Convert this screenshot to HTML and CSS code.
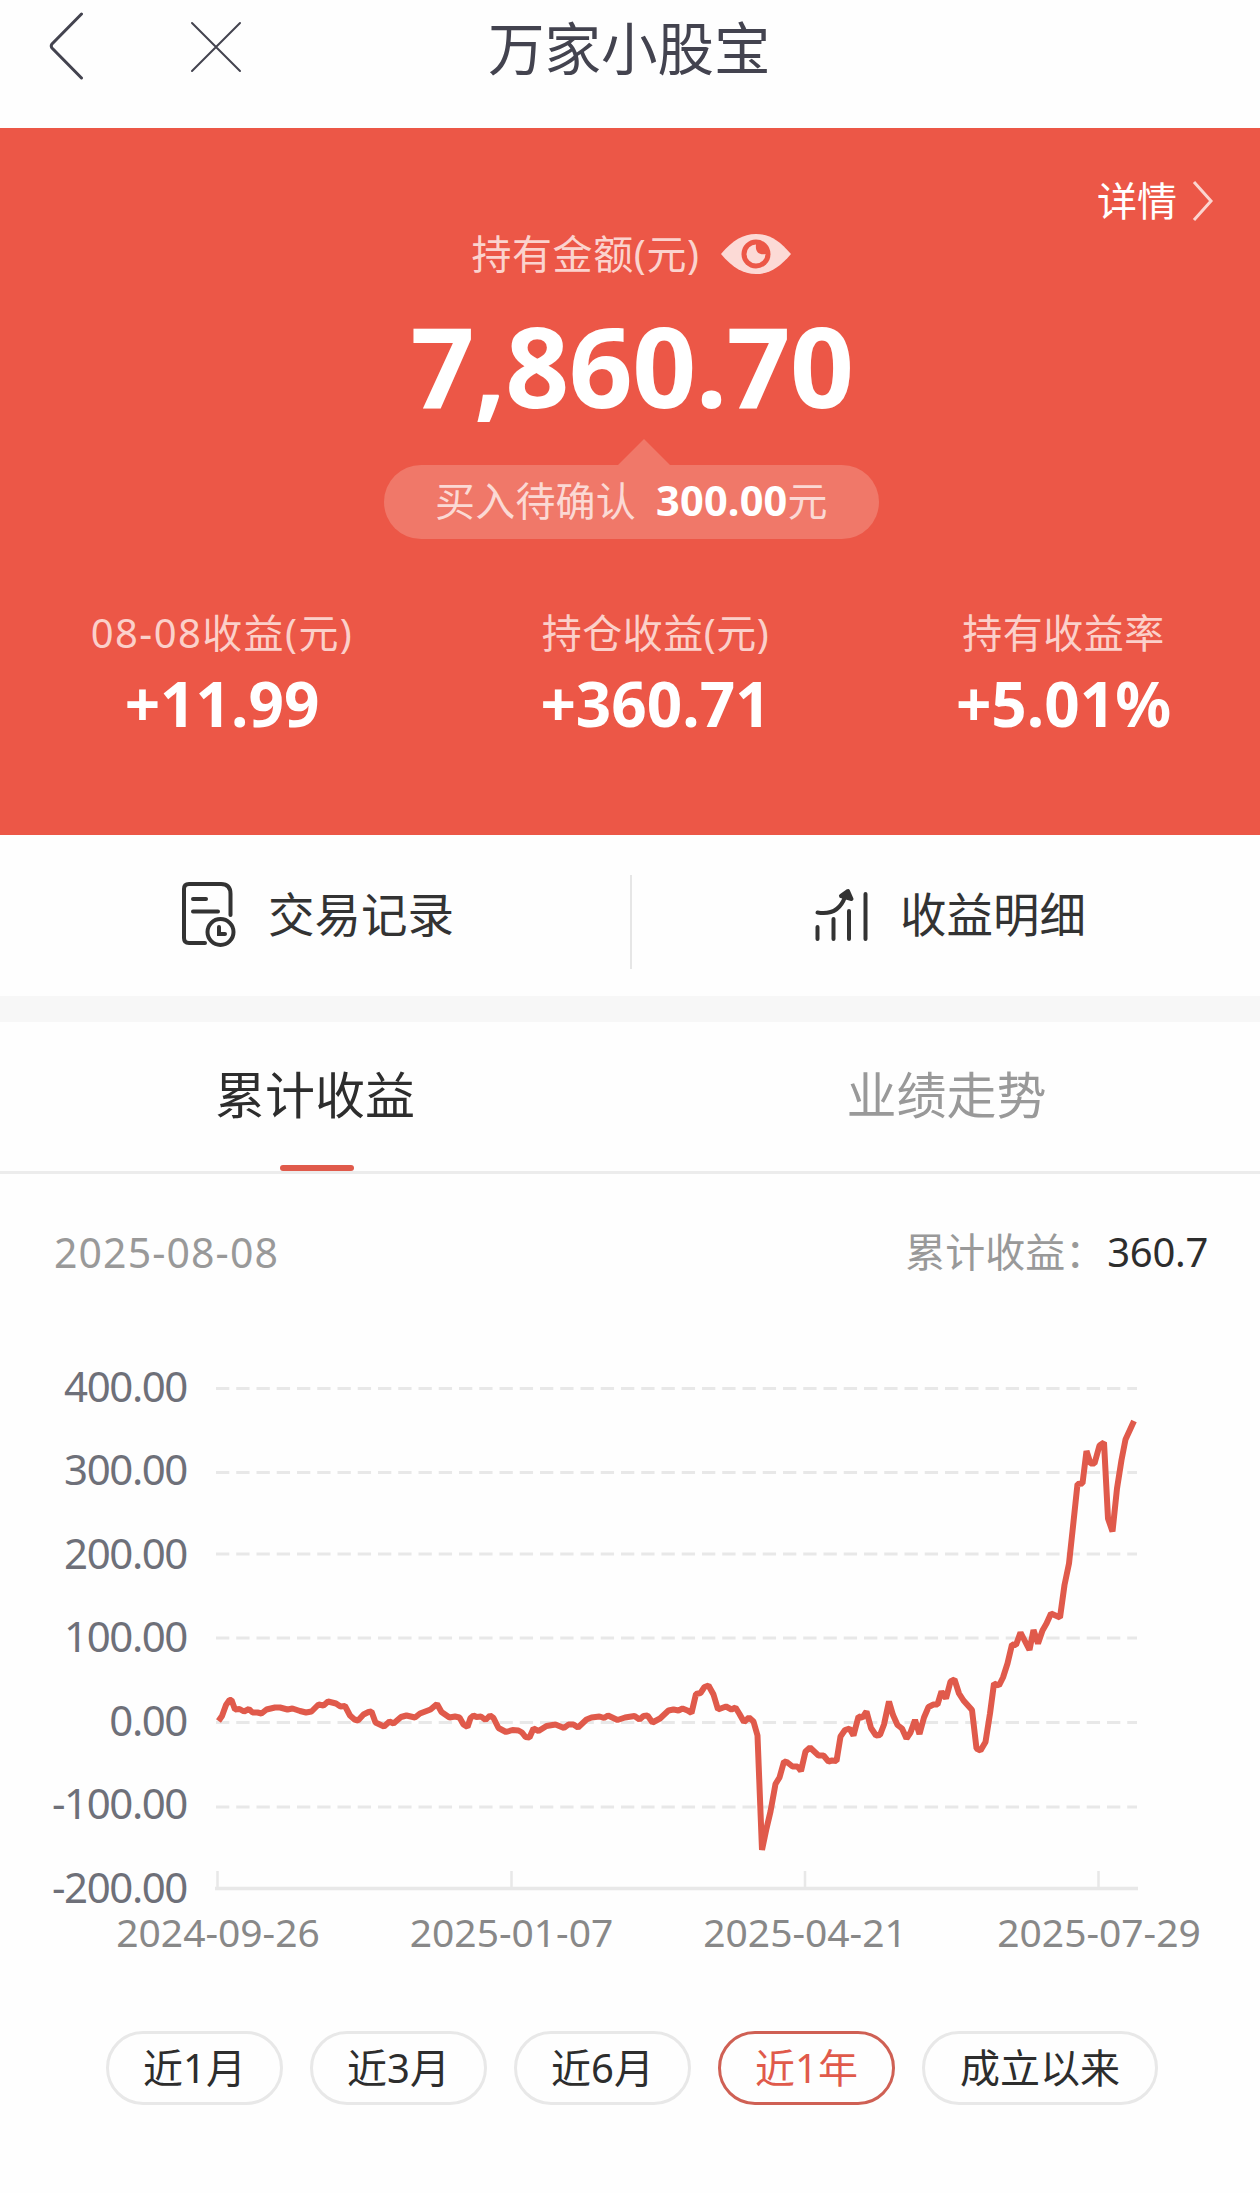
FILE: index.html
```html
<!DOCTYPE html>
<html lang="zh-CN">
<head>
  <meta charset="UTF-8" />
  <meta name="viewport" content="width=device-width, initial-scale=1.0" />
  <title>万家小股宝</title>
  <link rel="stylesheet" href="styles.css">
</head>
<body>
  <header class="navbar">
    <svg class="nav-back" width="36" height="68" viewBox="0 0 36 68"><path d="M33.500 2 L4 32 Q2.500 34 4 36 L33.500 66" /></svg>
    <svg class="nav-close" width="52" height="52" viewBox="0 0 52 52"><path d="M2 2 L50 50 M50 2 L2 50" /></svg>
    <h1>万家小股宝</h1>
  </header>

  <section class="summary">
    <a class="detail">详情
      <svg width="22" height="42" viewBox="0 0 22 42"><path d="M2 2 L19 21 L2 40" /></svg>
    </a>
    <div class="hold-label">
      <span>持有金额(元)</span>
      <svg width="70" height="42" viewBox="0 0 70 42">
        <path class="eye" d="M0 21 C12 7 22 1 35 1 C48 1 58 7 70 21 C58 35 48 41 35 41 C22 41 12 35 0 21 Z" />
        <circle class="eye-ring" cx="35" cy="21" r="14.500" />
        <path class="eye" d="M35 11.500 C34 19 38 22 44.500 21 A9.500 9.500 0 1 1 35 11.500 Z" />
      </svg>
    </div>
    <div class="amount">7,860.70</div>
    <div class="pending">
      <span>买入待确认</span><b>300.00</b><span>元</span>
    </div>
    <div class="stats">
      <div class="stat day"><p>08-08收益(元)</p><b>+11.99</b></div>
      <div class="stat"><p>持仓收益(元)</p><b>+360.71</b></div>
      <div class="stat"><p>持有收益率</p><b>+5.01%</b></div>
    </div>
  </section>

  <section class="actions">
    <a class="action">
      <svg class="icon-record" width="56" height="68" viewBox="0 0 56 68">
        <path d="M24 62 H8 Q3 62 3 57 V8 Q3 3 8 3 H40 Q49.500 3 49.500 13 V34" />
        <path d="M12 18 H25 M12 30.500 H37" />
        <circle cx="39.500" cy="51" r="13" />
        <path d="M38 46 V53 H44" />
      </svg>
      <span>交易记录</span>
    </a>
    <a class="action">
      <svg class="icon-profit" width="56" height="56" viewBox="0 0 56 56">
        <path d="M4.500 40 V52 M20.500 32 V52 M36 24 V52 M52.500 7 V52" />
        <path d="M4.500 25.500 Q25 29 32 10" />
        <path class="arrow" d="M35 4 L28 9 L38.500 12 Z" />
      </svg>
      <span>收益明细</span>
    </a>
  </section>

  <nav class="tabs">
    <a class="tab active">累计收益</a>
    <a class="tab">业绩走势</a>
  </nav>

  <div class="chart-head">
    <span class="date">2025-08-08</span>
    <span>累计收益：<em>360.7</em></span>
  </div>

  <svg class="chart" width="1260" height="650" viewBox="0 0 1260 650">
    <g class="grid">
      <path d="M216 48.500 H1137" />
      <path d="M216 132.500 H1137" />
      <path d="M216 214 H1137" />
      <path d="M216 298 H1137" />
      <path d="M216 382.500 H1137" />
      <path d="M216 467 H1137" />
    </g>
    <path class="axis" d="M215 548.500 H1138" />
    <path class="ticks" d="M217.500 531 V548 M511.500 531 V548 M805 531 V548 M1098.500 531 V548" />
    <g class="y-labels">
      <text x="187" y="62">400.00</text>
      <text x="187" y="145">300.00</text>
      <text x="187" y="229">200.00</text>
      <text x="187" y="312">100.00</text>
      <text x="187" y="396">0.00</text>
      <text x="187" y="479">-100.00</text>
      <text x="187" y="563">-200.00</text>
    </g>
    <g class="x-labels">
      <text x="218" y="607">2024-09-26</text>
      <text x="511.500" y="607">2025-01-07</text>
      <text x="805" y="607">2025-04-21</text>
      <text x="1099" y="607">2025-07-29</text>
    </g>
    <polyline class="line" points="218.500,381 222,376 226,365 229.500,360 231.500,360 235,369.500 239.500,369 244,371.500 249,369 252.500,372.500 257.500,372.500 261.500,373.500 266.500,369.500 275,367.500 280,367.500 287.500,369.500 292.500,368.500 300,371 306,372.500 311.500,371.500 318.500,364.500 323.500,365.500 328,361.500 336,363.500 340.500,366.500 345,366 350,375.500 354.500,379.500 358,380.500 363.500,374.500 368.500,372 371.500,371.500 375.500,382.500 384,386.500 389.500,381.500 393.500,383.500 401,377 406.500,375.500 415,377.500 420,373.500 430.500,369.500 437,364 441.500,372 449.500,377.500 455,376.500 459.500,377.500 463.500,384.500 467.500,387 470.500,378 473.500,375.500 476.500,377 481,376.500 485.500,380 490,375.500 493.500,378 498.500,388 506,392 512.500,390 518.500,390.500 522,392.500 525.500,397 529.500,397.500 533.500,388.500 538.500,391 546.500,386 555.500,384.500 564,388 568.500,384.500 573.500,384.500 578,387.500 586.500,379.500 591.500,377.500 599.500,376.500 604,378 608,375.500 617.500,380 625,377.500 634.500,376 639.500,379.500 643.500,376 647.500,375.500 652.500,382.500 660,378.500 668.500,370.500 673.500,369.500 678.500,370.500 682.500,368.500 687.500,370.500 691.500,373 696,354 700.500,353 704.500,347 708.500,345.500 713.500,354.500 718,369.500 726,366.500 731.500,369.500 735.500,367.500 739.500,374 744,382 749,377.500 753.500,381.500 757.500,395.500 762,510 766.500,488.500 770.500,471.500 775.500,444 779.500,437.500 784,421.500 787.500,422.500 792.500,426.500 797.500,426.500 801,431 805.500,411.500 810,407.500 818.500,415.500 823.500,415.500 828.500,421.500 832,420.500 836.500,421 840.500,396.500 845,390 849.500,388.500 853.500,395.500 858.500,376.500 862.500,377.500 866.500,371.500 871,388 876,395.500 880,395 884,384.500 889,361.500 893,375 897.500,385 902,388.500 906.500,398.500 910.500,392.500 915,380 919.500,394 924,377.500 928.500,367 933.500,364.500 937.500,364.500 941.500,351.500 946,358.500 950.500,341.500 954.500,339.500 959,353.500 963.500,360.500 972,370 976.500,408.500 980.500,410.500 985.500,402 990,373.500 994,343.500 999,345.500 1003,337.500 1007.500,323.500 1012,304.500 1016,305 1020.500,292.500 1029.500,310 1033.500,290 1038,303.500 1042.500,290.500 1046.500,283.500 1051,273.500 1060,277.500 1064.500,245 1069,223.500 1073,186.500 1077.500,144 1082.500,143.500 1086.500,111 1090.500,123.500 1094.500,123.500 1099.500,105.500 1104,102.500 1108,178.500 1112.500,191.500 1117,148.500 1121.500,120 1125.500,99.500 1134,81" />
  </svg>

  <div class="ranges">
    <button>近1月</button>
    <button>近3月</button>
    <button>近6月</button>
    <button class="active">近1年</button>
    <button class="wide">成立以来</button>
  </div>
</body>
</html>
```

FILE: styles.css
```css
* { box-sizing: border-box; margin: 0; padding: 0; }
body { width: 1260px; height: 2193px; background: #fefefe; color: #333; font-family: "Noto Sans", "Noto Sans CJK SC", sans-serif; font-size: 40px; overflow: hidden; }
svg { display: block; fill: none; }

.navbar { display: flex; align-items: flex-start; height: 128px; padding: 12px 0 0 48px; color: #43434f; }
.navbar svg { stroke: #43434f; stroke-width: 3; stroke-linecap: round; }
.nav-close { margin: 9px 0 0 106px; }
.navbar .nav-close { stroke-width: 2; }
.navbar h1 { margin-left: 246px; font-size: 56.5px; font-weight: 400; line-height: 74px; }

.summary { height: 707px; padding-top: 45px; background: #ec5747; color: #fff; }
.detail { display: flex; justify-content: flex-end; align-items: center; gap: 15px; height: 56px; padding-right: 46px; line-height: 56px; }
.detail svg { stroke: #fbd5d0; stroke-width: 3; }
.hold-label { display: flex; justify-content: center; align-items: center; gap: 21px; height: 50px; padding-left: 2px; line-height: 48px; color: #fbd3ce; letter-spacing: 0.6px; }
.eye { fill: #fcdad6; }
.eye-ring { fill: #ec5747; }
.amount { height: 161px; padding-left: 4px; font-size: 112px; font-weight: 700; line-height: 172px; text-align: center; letter-spacing: -0.6px; }
.pending { position: relative; display: flex; width: 495px; height: 74px; margin: 25px 0 0 384px; padding-left: 51px; border-radius: 37px; background: #f07869; color: #fbd9d4; line-height: 71px; letter-spacing: 0.2px; }
.pending::before { content: ""; position: absolute; left: 234px; top: -26px; border: 26px solid transparent; border-top: 0; border-bottom-color: #f07869; }
.pending b { margin-left: 20px; color: #fff; font-size: 41.5px; }
.stats { display: grid; grid-template-columns: 444px 423px 393px; margin-top: 64px; text-align: center; }
.stat p { height: 60px; line-height: 60px; color: #fbd0ca; letter-spacing: 0.5px; }
.stat.day p { letter-spacing: 1.4px; }
.stat b { display: block; font-size: 62px; line-height: 80px; }

.actions { display: grid; grid-template-columns: 1fr 1fr; height: 161px; padding-top: 40px; }
.action { display: flex; align-items: flex-start; height: 94px; padding-left: 181px; font-size: 46.5px; line-height: 78px; }
.action + .action { border-left: 2px solid #e6e6e6; }
.action svg { stroke: #333; stroke-width: 4; stroke-linecap: round; margin-right: 31px; }
.action .icon-record { margin-top: 6px; }
.action .icon-profit { margin-top: 12px; }
.arrow { fill: #333; stroke-linejoin: round; }

.tabs { display: grid; grid-template-columns: 1fr 1fr; height: 178px; border-top: 26px solid #f7f7f7; border-bottom: 3px solid #ececec; }
.tab { position: relative; padding-left: 3px; font-size: 50px; line-height: 146px; text-align: center; color: #999; }
.tab.active { padding-left: 0; color: #2d2d2d; }
.tab.active::after { content: ""; position: absolute; left: 280px; bottom: 0; width: 74px; height: 6px; border-radius: 3px; background: #e05a4b; }

.chart-head { display: flex; justify-content: space-between; height: 166px; padding: 48px 52px 0 54px; color: #999; line-height: 60px; }
.date { font-size: 41px; letter-spacing: 1.1px; }
.chart-head em { margin-left: 2px; color: #2d2d2d; font-style: normal; letter-spacing: -0.3px; }
.grid path { stroke: #e8e8e8; stroke-width: 3; stroke-dasharray: 13.3 6.95; }
.axis { stroke: #e8e8e8; stroke-width: 3.5; }
.ticks { stroke: #e8e8e8; stroke-width: 2.5; }
.y-labels { fill: #6e7079; font-size: 42px; text-anchor: end; letter-spacing: -1.4px; }
.x-labels { fill: #888; font-size: 39px; text-anchor: middle; }
.line { stroke: #e05a4b; stroke-width: 6; stroke-linejoin: bevel; }

.ranges { display: flex; gap: 27px; padding: 41px 0 0 106px; }
.ranges button { width: 177px; height: 74px; border: 3px solid #e8e8e8; border-radius: 37px; background: #fefefe; color: #2d2d2d; font: inherit; line-height: 64px; }
.ranges .wide { width: 236px; }
.ranges .active { border-color: #cf6054; color: #e05a4b; }
```
